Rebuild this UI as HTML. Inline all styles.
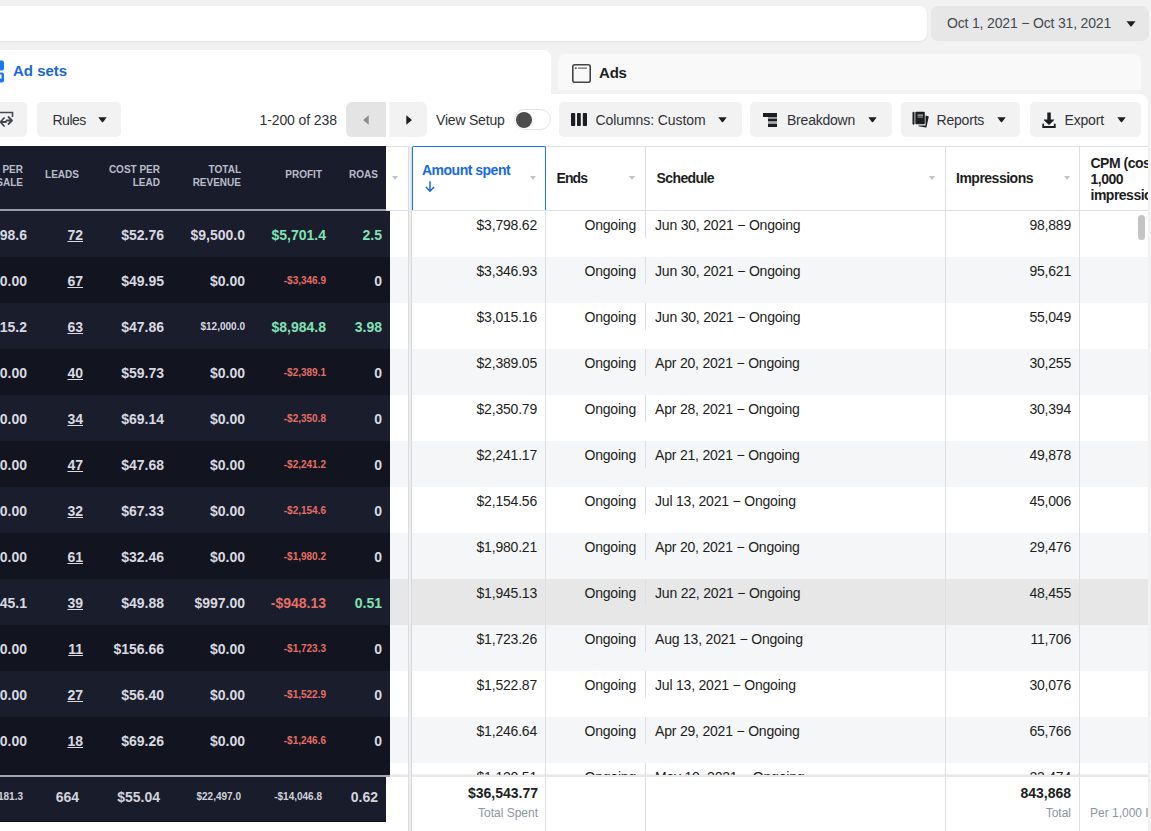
<!DOCTYPE html>
<html><head><meta charset="utf-8"><style>
*{box-sizing:border-box;margin:0;padding:0}
html,body{width:1151px;height:831px;overflow:hidden;background:#f2f2f2;font-family:"Liberation Sans",sans-serif;color:#1c1e21;position:relative}
.abs{position:absolute}
#search{position:absolute;left:-20px;top:6px;width:947px;height:35px;background:#fff;border-radius:8px;box-shadow:0 1px 2px rgba(0,0,0,0.07)}
#date{position:absolute;left:931px;top:6px;width:218px;height:35px;background:#e7e7e7;border-radius:7px}
.txt{position:absolute;white-space:nowrap;line-height:1}
.caret{position:absolute;width:0;height:0;border-left:5px solid transparent;border-right:5px solid transparent;border-top:5px solid #1c1e21}
#adsets{position:absolute;left:-10px;top:50px;width:561px;height:60px;background:#fff;border-radius:8px}
#adstab{position:absolute;left:558px;top:53.5px;width:583px;height:36px;background:#f9f9f9;border-radius:8px 8px 0 0}
#panel{position:absolute;left:-10px;top:94px;width:1158px;height:760px;background:#fff;border-radius:0 8px 0 0}
.btn{position:absolute;top:102px;height:35px;background:#f2f2f2;border-radius:5px}
.bt{position:absolute;top:111.7px;font-size:14px;color:#303236;white-space:nowrap;line-height:16px}
.hline{position:absolute;left:0;width:1148px;height:1px;background:#dddfe2;z-index:2}
.vline{position:absolute;width:1px;background:#dddfe2;z-index:2}
.hd{position:absolute;font-size:14px;font-weight:bold;color:#1c1e21;white-space:nowrap;line-height:16px}
.hcaret{position:absolute;width:0;height:0;border-left:3.5px solid transparent;border-right:3.5px solid transparent;border-top:4px solid #bec3c9}
.mrow{position:absolute;left:0;width:1148px;height:46px;background:#fff}
.mrow.alt{background:#f5f6f7}
.mrow.hov{background:#e7e7e7}
.mrow span{position:absolute;top:6px;font-size:14px;line-height:16px;white-space:nowrap;color:#1c1e21;letter-spacing:-0.2px}
.mrow .amt{right:611px}
.mrow .ends{right:512px}
.mrow .sdiv{left:645px;top:0;width:1px;height:27px;background:#dddfe2}
.mrow .sch{left:655px}
.mrow .imp{right:77px}
#dark{position:absolute;left:0;top:0;width:0;height:0;z-index:10}
.dhead{position:absolute;left:0;top:146px;width:386px;height:63px;background:#191c2b}
.dsep{position:absolute;left:0;top:209px;width:386px;height:2px;background:#9a9cab}
.dbody{position:absolute;left:0;top:211px;width:390px;height:564px;background:#12141f;overflow:hidden}
.dsep2{position:absolute;left:0;top:775px;width:390px;height:2px;background:#a3a5b0}
.dfoot{position:absolute;left:0;top:777px;width:386px;height:45px;background:#191c2b;border-bottom:1px solid #10121b}
.drow{position:absolute;left:0;width:390px;height:46px;background:#1a1d2c;margin-top:-211px}
.drow.alt{background:#12141f}
.h{position:absolute;font-size:10px;font-weight:bold;color:#babcc8;line-height:12.5px;text-align:right;white-space:nowrap}
.h span{display:block}
.v{position:absolute;font-size:14px;font-weight:bold;color:#d8d9e0;line-height:16px;white-space:nowrap;text-align:right}
.drow .v{top:16px}
.v.sm{font-size:10px;line-height:12px;top:18px}
.drow .v.sm{top:18px}
.v.green{color:#82e2b5}
.v.red{color:#e46e66}
.v.c1{right:363px}
.v.leads{right:307px;text-decoration:underline}
.v.cpl{right:226px}
.v.rev{right:145px}
.v.prof{right:64px}
.v.roas{right:8px}

.c1h{right:363px;top:18px}
.leadsh{right:307px;top:23px}
.cplh{right:226px;top:18px}
.revh{right:145px;top:18px}
.profh{right:64px;top:23px}
.roash{right:8px;top:23px}
.dfoot .v{top:11.5px}
.dfoot .v.sm{top:13.5px}
.dfoot .v{font-weight:bold;color:#d2d3da}
.v.leadsf{right:307px}
#mfoot{position:absolute;left:0;top:775px;width:1148px;overflow:hidden;height:56px;background:#fff;z-index:3;border-top:2px solid #e8e8e8;box-shadow:0 -1px 1px rgba(0,0,0,0.05)}
.ft{position:absolute;white-space:nowrap;line-height:16px;text-align:right}

</style></head><body>
<div id="search"></div>
<div id="date"></div>
<div class="txt" style="left:947px;top:16.3px;font-size:14px;color:#444950;letter-spacing:-0.17px">Oct 1, 2021 − Oct 31, 2021</div>
<svg class="abs" style="left:1126px;top:21px" width="10" height="6" viewBox="0 0 10 6"><path d="M0.5 0.3H9.5L5.6 5.2Q5 5.8 4.4 5.2Z" fill="#1c1e21"/></svg>
<div id="adsets"></div>
<div id="adstab"></div>
<div id="panel"></div>
<svg class="abs" style="left:-6px;top:60px" width="10" height="23" viewBox="0 0 10 23"><rect x="0" y="0.5" width="10" height="10" rx="2" fill="#1877f2"/><path d="M2 12.5H8Q10 12.5 10 14.5V20.5Q10 22.5 8 22.5H2Q0 22.5 0 20.5V14.5Q0 12.5 2 12.5ZM0 14.5V18.5H7.5V14.5Z" fill="#1877f2" fill-rule="evenodd"/></svg>
<div class="txt" style="left:13px;top:62.5px;font-size:15px;font-weight:bold;color:#1a66d8">Ad sets</div>
<svg class="abs" style="left:572px;top:64px" width="19" height="19" viewBox="0 0 19 19"><rect x="0.8" y="0.8" width="17.4" height="17.4" rx="2" fill="none" stroke="#454545" stroke-width="1.6"/><circle cx="3.8" cy="4.2" r="0.9" fill="#454545"/><rect x="6" y="3.5" width="9" height="1.3" fill="#777"/></svg>
<div class="txt" style="left:599px;top:64.5px;font-size:15px;font-weight:bold;color:#1c1e21;letter-spacing:-0.2px">Ads</div>
<!-- toolbar -->
<div class="btn" style="left:-10px;width:37px"></div>
<svg class="abs" style="left:0;top:111px" width="16" height="18" viewBox="0 0 16 18"><path d="M-4 1.5H12.5V6" fill="none" stroke="#444950" stroke-width="1.6"/><path d="M4 7L0.5 11L4 15M1 11H6" fill="none" stroke="#444950" stroke-width="1.8" stroke-linecap="round" stroke-linejoin="round"/><path d="M8.5 6L12 9.5L8.5 13M11.5 9.5H6.5" fill="none" stroke="#444950" stroke-width="1.8" stroke-linecap="round" stroke-linejoin="round"/></svg>
<div class="btn" style="left:36.5px;width:84.5px"></div>
<div class="bt" style="left:52.5px;letter-spacing:-0.5px">Rules</div>
<svg class="abs caretv" style="left:97.5px;top:117px" width="9" height="6" viewBox="0 0 9 6"><path d="M0.3 0.3H8.7L5.1 5Q4.5 5.6 3.9 5Z" fill="#1c1e21"/></svg>
<div class="bt" style="left:259.5px;letter-spacing:-0.1px">1-200 of 238</div>
<div class="btn" style="left:346px;width:39.5px;background:#e4e4e4;border-radius:6px 0 0 6px"></div>
<div class="btn" style="left:388.5px;width:38px;border-radius:0 6px 6px 0"></div>
<svg class="abs" style="left:362.5px;top:114.5px" width="6" height="10" viewBox="0 0 6 10"><path d="M5.7 0.3V9.7L0.6 5.6Q0 5 0.6 4.4Z" fill="#8a8d91"/></svg>
<svg class="abs" style="left:405.5px;top:114.5px" width="6" height="10" viewBox="0 0 6 10"><path d="M0.3 0.3V9.7L5.4 5.6Q6 5 5.4 4.4Z" fill="#1c1e21"/></svg>
<div class="bt" style="left:436px;letter-spacing:-0.2px">View Setup</div>
<div class="abs" style="left:513.5px;top:108.7px;width:37px;height:21px;border:1.5px solid #e3e3e3;border-radius:11px;background:#fff"></div>
<div class="abs" style="left:516px;top:111.7px;width:16px;height:16px;border-radius:50%;background:#4b4b4b"></div>
<div class="btn" style="left:559px;width:182.5px"></div>
<svg class="abs" style="left:571px;top:112.8px" width="16" height="13" viewBox="0 0 16 13"><rect x="0" y="0" width="4.2" height="13" rx="0.8" fill="#1c1e21"/><rect x="6" y="0" width="3.8" height="13" rx="0.8" fill="#1c1e21"/><rect x="11.8" y="0" width="4.2" height="13" rx="0.8" fill="#1c1e21"/></svg>
<div class="bt" style="left:595.5px;letter-spacing:-0.08px">Columns: Custom</div>
<svg class="abs caretv" style="left:717.5px;top:117px" width="9" height="6" viewBox="0 0 9 6"><path d="M0.3 0.3H8.7L5.1 5Q4.5 5.6 3.9 5Z" fill="#1c1e21"/></svg>
<div class="btn" style="left:750px;width:142px"></div>
<svg class="abs" style="left:763px;top:112.5px" width="14" height="14" viewBox="0 0 14 14"><rect x="0" y="0" width="14" height="4" fill="#1c1e21"/><rect x="5" y="5.5" width="9" height="3" fill="#1c1e21"/><rect x="5" y="10.5" width="9" height="3.5" fill="#1c1e21"/><rect x="5" y="4" width="9" height="1.5" fill="#999"/><rect x="5" y="8.5" width="9" height="2" fill="#aaa"/></svg>
<div class="bt" style="left:787px;letter-spacing:-0.22px">Breakdown</div>
<svg class="abs caretv" style="left:867.5px;top:117px" width="9" height="6" viewBox="0 0 9 6"><path d="M0.3 0.3H8.7L5.1 5Q4.5 5.6 3.9 5Z" fill="#1c1e21"/></svg>
<div class="btn" style="left:901px;width:119px"></div>
<svg class="abs" style="left:911.5px;top:111px" width="18" height="17" viewBox="0 0 18 17"><rect x="0.5" y="0.7" width="2" height="13" rx="1" fill="#1c1e21"/><path d="M13.5 4.5L16.3 5.3Q16.8 5.5 16.7 6L14.5 16Q14.3 16.5 13.8 16.4L6.5 15.2V14.5H13.5Z" fill="#1c1e21"/><rect x="3.3" y="0.7" width="9.5" height="12.5" rx="1" fill="#1c1e21"/><rect x="5.5" y="3.5" width="5.5" height="1.2" fill="#bbb"/><rect x="5.5" y="5.5" width="5.5" height="1.1" fill="#999"/></svg>
<div class="bt" style="left:936.5px;letter-spacing:-0.2px">Reports</div>
<svg class="abs caretv" style="left:996.5px;top:117px" width="9" height="6" viewBox="0 0 9 6"><path d="M0.3 0.3H8.7L5.1 5Q4.5 5.6 3.9 5Z" fill="#1c1e21"/></svg>
<div class="btn" style="left:1029.5px;width:111px"></div>
<svg class="abs" style="left:1042px;top:111.5px" width="14" height="16" viewBox="0 0 14 16"><path d="M5.3 0.5H8.8V7.5H11.8Q12.5 7.6 12 8.2L7.6 12.6Q7 13.2 6.4 12.6L2 8.2Q1.5 7.6 2.2 7.5H5.3Z" fill="#1c1e21"/><path d="M1.2 12.5V15H12.8V12.5" fill="none" stroke="#1c1e21" stroke-width="1.8" stroke-linecap="round"/></svg>
<div class="bt" style="left:1064.5px;letter-spacing:-0.17px">Export</div>
<svg class="abs caretv" style="left:1117px;top:117px" width="9" height="6" viewBox="0 0 9 6"><path d="M0.3 0.3H8.7L5.1 5Q4.5 5.6 3.9 5Z" fill="#1c1e21"/></svg>
<!-- table header -->
<div class="hline" style="top:146px"></div>
<div class="hline" style="top:210px"></div>
<div class="abs" style="left:408px;top:146px;width:4px;height:685px;background:#eceef0;border-left:1px solid #dcdde0;border-right:1px solid #d6d8db;z-index:4"></div>
<div class="abs" style="left:412px;top:146px;width:134px;height:64px;border:1px solid #1877f2;border-bottom:none;border-radius:2px 2px 0 0;z-index:4"></div>
<div class="hd" style="left:422px;top:161.5px;color:#1669e4;letter-spacing:-0.5px">Amount spent</div>
<svg class="abs" style="left:424.5px;top:181px" width="10" height="11" viewBox="0 0 10 11"><path d="M5 0.3V10.2M0.9 6L5 10.2L9.1 6" fill="none" stroke="#1669e4" stroke-width="1.5"/></svg>
<div class="hcaret" style="left:530px;top:176px"></div>
<div class="hcaret" style="left:391.5px;top:176px"></div>
<div class="vline" style="left:645px;top:146px;height:64px"></div>
<div class="vline" style="left:945px;top:146px;height:685px"></div>
<div class="vline" style="left:1079px;top:146px;height:685px"></div>
<div class="vline" style="left:545px;top:146px;height:685px"></div>
<div class="hd" style="left:556.5px;top:170px;letter-spacing:-0.9px">Ends</div>
<div class="hcaret" style="left:629px;top:176px"></div>
<div class="hd" style="left:656.5px;top:170px;letter-spacing:-0.6px">Schedule</div>
<div class="hcaret" style="left:929px;top:176px"></div>
<div class="hd" style="left:956px;top:170px;letter-spacing:-0.5px">Impressions</div>
<div class="hcaret" style="left:1063.5px;top:176px"></div>
<div class="abs" style="left:1080px;top:147px;width:68px;height:62px;overflow:hidden"><div class="hd" style="left:10.5px;top:8px;line-height:16px;letter-spacing:-0.5px">CPM (cost per<br>1,000<br>impressions)</div></div>
<div id="mfoot">
<div class="vline" style="left:545px;top:0;height:57px"></div>
<div class="vline" style="left:645px;top:0;height:57px"></div>
<div class="vline" style="left:945px;top:0;height:57px"></div>
<div class="vline" style="left:1079px;top:0;height:57px"></div>
<div class="ft" style="right:610px;top:8px;font-size:14px;font-weight:bold">$36,543.77</div>
<div class="ft" style="right:610px;top:28px;font-size:12px;color:#8d949e">Total Spent</div>
<div class="ft" style="right:77px;top:8px;font-size:14px;font-weight:bold">843,868</div>
<div class="ft" style="right:77px;top:28px;font-size:12px;color:#8d949e">Total</div>
<div class="ft" style="left:1090px;top:28px;font-size:12px;color:#8d949e;text-align:left">Per 1,000 Impressions</div>
</div>
<div class="abs" style="left:1138px;top:215px;width:7px;height:25px;border-radius:4px;background:#c4c4c4;z-index:4"></div>

<div id="mrows"><div class="mrow" style="top:211px"><span class="amt">$3,798.62</span><span class="ends">Ongoing</span><span class="sdiv"></span><span class="sch">Jun 30, 2021 − Ongoing</span><span class="imp">98,889</span></div><div class="mrow alt" style="top:257px"><span class="amt">$3,346.93</span><span class="ends">Ongoing</span><span class="sdiv"></span><span class="sch">Jun 30, 2021 − Ongoing</span><span class="imp">95,621</span></div><div class="mrow" style="top:303px"><span class="amt">$3,015.16</span><span class="ends">Ongoing</span><span class="sdiv"></span><span class="sch">Jun 30, 2021 − Ongoing</span><span class="imp">55,049</span></div><div class="mrow alt" style="top:349px"><span class="amt">$2,389.05</span><span class="ends">Ongoing</span><span class="sdiv"></span><span class="sch">Apr 20, 2021 − Ongoing</span><span class="imp">30,255</span></div><div class="mrow" style="top:395px"><span class="amt">$2,350.79</span><span class="ends">Ongoing</span><span class="sdiv"></span><span class="sch">Apr 28, 2021 − Ongoing</span><span class="imp">30,394</span></div><div class="mrow alt" style="top:441px"><span class="amt">$2,241.17</span><span class="ends">Ongoing</span><span class="sdiv"></span><span class="sch">Apr 21, 2021 − Ongoing</span><span class="imp">49,878</span></div><div class="mrow" style="top:487px"><span class="amt">$2,154.56</span><span class="ends">Ongoing</span><span class="sdiv"></span><span class="sch">Jul 13, 2021 − Ongoing</span><span class="imp">45,006</span></div><div class="mrow alt" style="top:533px"><span class="amt">$1,980.21</span><span class="ends">Ongoing</span><span class="sdiv"></span><span class="sch">Apr 20, 2021 − Ongoing</span><span class="imp">29,476</span></div><div class="mrow hov" style="top:579px"><span class="amt">$1,945.13</span><span class="ends">Ongoing</span><span class="sdiv"></span><span class="sch">Jun 22, 2021 − Ongoing</span><span class="imp">48,455</span></div><div class="mrow alt" style="top:625px"><span class="amt">$1,723.26</span><span class="ends">Ongoing</span><span class="sdiv"></span><span class="sch">Aug 13, 2021 − Ongoing</span><span class="imp">11,706</span></div><div class="mrow" style="top:671px"><span class="amt">$1,522.87</span><span class="ends">Ongoing</span><span class="sdiv"></span><span class="sch">Jul 13, 2021 − Ongoing</span><span class="imp">30,076</span></div><div class="mrow alt" style="top:717px"><span class="amt">$1,246.64</span><span class="ends">Ongoing</span><span class="sdiv"></span><span class="sch">Apr 29, 2021 − Ongoing</span><span class="imp">65,766</span></div><div class="mrow" style="top:763px"><span class="amt">$1,120.51</span><span class="ends">Ongoing</span><span class="sdiv"></span><span class="sch">May 10, 2021 − Ongoing</span><span class="imp">23,474</span></div></div>
<div id="dark">
<div class="dhead"><span class="h c1h"><span>PER</span><span>SALE</span></span><span class="h leadsh">LEADS</span><span class="h cplh"><span>COST PER</span><span>LEAD</span></span><span class="h revh"><span>TOTAL</span><span>REVENUE</span></span><span class="h profh">PROFIT</span><span class="h roash">ROAS</span></div>
<div class="dsep"></div>
<div class="dbody"><div class="drow" style="top:211px"><span class="v c1">98.6</span><span class="v leads">72</span><span class="v cpl">$52.76</span><span class="v rev">$9,500.0</span><span class="v prof green">$5,701.4</span><span class="v roas green">2.5</span></div><div class="drow alt" style="top:257px"><span class="v c1">0.00</span><span class="v leads">67</span><span class="v cpl">$49.95</span><span class="v rev">$0.00</span><span class="v prof sm red">-$3,346.9</span><span class="v roas">0</span></div><div class="drow" style="top:303px"><span class="v c1">15.2</span><span class="v leads">63</span><span class="v cpl">$47.86</span><span class="v rev sm">$12,000.0</span><span class="v prof green">$8,984.8</span><span class="v roas green">3.98</span></div><div class="drow alt" style="top:349px"><span class="v c1">0.00</span><span class="v leads">40</span><span class="v cpl">$59.73</span><span class="v rev">$0.00</span><span class="v prof sm red">-$2,389.1</span><span class="v roas">0</span></div><div class="drow" style="top:395px"><span class="v c1">0.00</span><span class="v leads">34</span><span class="v cpl">$69.14</span><span class="v rev">$0.00</span><span class="v prof sm red">-$2,350.8</span><span class="v roas">0</span></div><div class="drow alt" style="top:441px"><span class="v c1">0.00</span><span class="v leads">47</span><span class="v cpl">$47.68</span><span class="v rev">$0.00</span><span class="v prof sm red">-$2,241.2</span><span class="v roas">0</span></div><div class="drow" style="top:487px"><span class="v c1">0.00</span><span class="v leads">32</span><span class="v cpl">$67.33</span><span class="v rev">$0.00</span><span class="v prof sm red">-$2,154.6</span><span class="v roas">0</span></div><div class="drow alt" style="top:533px"><span class="v c1">0.00</span><span class="v leads">61</span><span class="v cpl">$32.46</span><span class="v rev">$0.00</span><span class="v prof sm red">-$1,980.2</span><span class="v roas">0</span></div><div class="drow" style="top:579px"><span class="v c1">45.1</span><span class="v leads">39</span><span class="v cpl">$49.88</span><span class="v rev">$997.00</span><span class="v prof red">-$948.13</span><span class="v roas green">0.51</span></div><div class="drow alt" style="top:625px"><span class="v c1">0.00</span><span class="v leads">11</span><span class="v cpl">$156.66</span><span class="v rev">$0.00</span><span class="v prof sm red">-$1,723.3</span><span class="v roas">0</span></div><div class="drow" style="top:671px"><span class="v c1">0.00</span><span class="v leads">27</span><span class="v cpl">$56.40</span><span class="v rev">$0.00</span><span class="v prof sm red">-$1,522.9</span><span class="v roas">0</span></div><div class="drow alt" style="top:717px"><span class="v c1">0.00</span><span class="v leads">18</span><span class="v cpl">$69.26</span><span class="v rev">$0.00</span><span class="v prof sm red">-$1,246.6</span><span class="v roas">0</span></div></div>
<div class="dsep2"></div>
<div class="dfoot"><span class="v c1 sm">181.3</span><span class="v leadsf">664</span><span class="v cpl">$55.04</span><span class="v rev sm">$22,497.0</span><span class="v prof sm">-$14,046.8</span><span class="v roas">0.62</span></div>
</div>
</body></html>
